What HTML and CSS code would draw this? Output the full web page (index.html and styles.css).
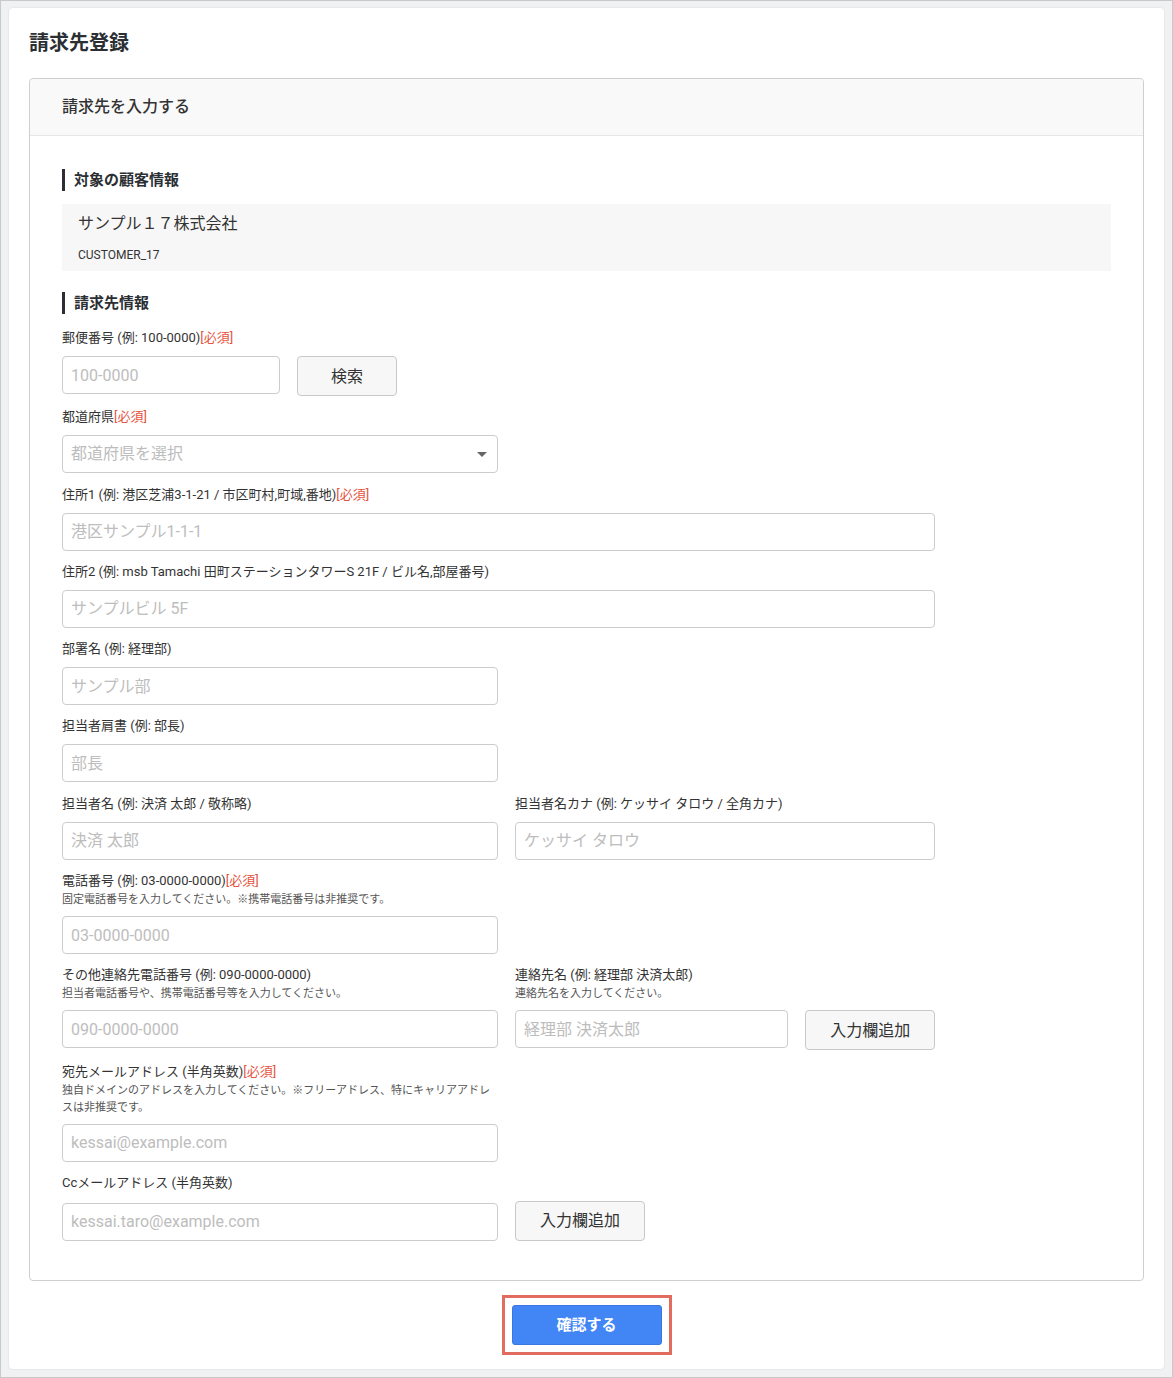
FILE: index.html
```html
<!DOCTYPE html>
<html lang="ja">
<head>
<meta charset="utf-8">
<title>請求先登録</title>
<link rel="stylesheet" href="styles.css">
</head>
<body>
<div class="frame">
  <div class="card">
    <h1 class="title">請求先登録</h1>
    <div class="panel">
      <div class="panel-head">請求先を入力する</div>
      <div class="panel-body">
        <h2 class="sec">対象の顧客情報</h2>
        <div class="cust">
          <div class="cust-name">サンプル１７株式会社</div>
          <div class="cust-id">CUSTOMER_17</div>
        </div>
        <h2 class="sec sec2">請求先情報</h2>
        <div class="grid">
          <div class="field full">
            <div class="label">郵便番号 (例: 100-0000)<span class="req">[必須]</span></div>
            <div class="row">
              <input class="inp w218" placeholder="100-0000">
              <button class="btn w100">検索</button>
            </div>
          </div>
          <div class="field">
            <div class="label">都道府県<span class="req">[必須]</span></div>
            <div class="select"><span>都道府県を選択</span><i class="caret"></i></div>
          </div>
          <div class="field full">
            <div class="label">住所1 (例: 港区芝浦3-1-21 / 市区町村,町域,番地)<span class="req">[必須]</span></div>
            <input class="inp" placeholder="港区サンプル1-1-1">
          </div>
          <div class="field full">
            <div class="label">住所2 (例: msb Tamachi 田町ステーションタワーS 21F / ビル名,部屋番号)</div>
            <input class="inp" placeholder="サンプルビル 5F">
          </div>
          <div class="field full">
            <div class="label">部署名 (例: 経理部)</div>
            <input class="inp w436" placeholder="サンプル部">
          </div>
          <div class="field full">
            <div class="label">担当者肩書 (例: 部長)</div>
            <input class="inp w436" placeholder="部長">
          </div>
          <div class="field">
            <div class="label">担当者名 (例: 決済 太郎 / 敬称略)</div>
            <input class="inp" placeholder="決済 太郎">
          </div>
          <div class="field">
            <div class="label">担当者名カナ (例: ケッサイ タロウ / 全角カナ)</div>
            <input class="inp" placeholder="ケッサイ タロウ">
          </div>
          <div class="field full">
            <div class="label">電話番号 (例: 03-0000-0000)<span class="req">[必須]</span></div>
            <div class="help">固定電話番号を入力してください。※携帯電話番号は非推奨です。</div>
            <input class="inp w436" placeholder="03-0000-0000">
          </div>
          <div class="field">
            <div class="label">その他連絡先電話番号 (例: 090-0000-0000)</div>
            <div class="help">担当者電話番号や、携帯電話番号等を入力してください。</div>
            <input class="inp" placeholder="090-0000-0000">
          </div>
          <div class="field">
            <div class="label">連絡先名 (例: 経理部 決済太郎)</div>
            <div class="help">連絡先名を入力してください。</div>
            <div class="row">
              <input class="inp w274" placeholder="経理部 決済太郎">
              <button class="btn w130">入力欄追加</button>
            </div>
          </div>
          <div class="field">
            <div class="label">宛先メールアドレス (半角英数)<span class="req">[必須]</span></div>
            <div class="help">独自ドメインのアドレスを入力してください。※フリーアドレス、特にキャリアアドレスは非推奨です。</div>
            <input class="inp" placeholder="kessai@example.com">
          </div>
          <div class="field"></div>
          <div class="field full last">
            <div class="label">Ccメールアドレス (半角英数)</div>
            <div class="row bottom">
              <input class="inp w436" placeholder="kessai.taro@example.com">
              <button class="btn w130">入力欄追加</button>
            </div>
          </div>
        </div>
      </div>
    </div>
    <div class="actions">
      <div class="highlight"><button class="primary">確認する</button></div>
    </div>
  </div>
</div>
</body>
</html>
```

FILE: styles.css
```css
* { box-sizing: border-box; }
html, body { margin: 0; padding: 0; }
body {
  font-family: Roboto, "Noto Sans CJK JP", sans-serif;
  color: #333;
  background: #fff;
}
.frame {
  width: 1173px;
  height: 1378px;
  border: 1px solid #c9c9c9;
  background: #f0f1f3;
  padding: 7px 8px 8px 8px;
}
.card {
  background: #fff;
  border-radius: 4px;
  box-shadow: 0 0 2px rgba(0,0,0,0.12);
  height: 1361px;
  padding: 21px 20px 0 20px;
}
.title {
  margin: 0 0 21px 0;
  font-size: 20px;
  line-height: 28px;
  font-weight: 700;
  color: #2b2f33;
}
.panel {
  border: 1px solid #cfcfcf;
  border-radius: 4px;
  width: 1115px;
  height: 1203px;
}
.panel-head {
  height: 57px;
  background: #f9f9f9;
  border-bottom: 1px solid #e6e6e6;
  border-radius: 4px 4px 0 0;
  padding: 0 32px;
  font-size: 16px;
  font-weight: 500;
  line-height: 56px;
  color: #333;
}
.panel-body {
  padding: 33px 32px 0 32px;
}
.sec {
  margin: 0 0 13px 0;
  border-left: 3px solid #2b2f33;
  padding-left: 9px;
  font-size: 15px;
  font-weight: 700;
  line-height: 22px;
  color: #2b2f33;
}
.sec2 { margin-top: 21px; margin-bottom: 14px; }
.cust {
  background: #f7f7f7;
  height: 67px;
  padding: 8px 16px 0 16px;
}
.cust-name { font-size: 16px; line-height: 24px; color: #333; }
.cust-id { font-size: 12px; line-height: 16px; margin-top: 11px; color: #333; }
.grid {
  display: grid;
  grid-template-columns: 436px 420px;
  column-gap: 17px;
}
.field { margin-bottom: 11.3px; }
.field.last { margin-bottom: 0; }
.full { grid-column: 1 / 3; }
.label {
  font-size: 13px;
  line-height: 20px;
  margin-bottom: 8px;
  color: #333;
}
.label:has(+ .help) { margin-bottom: 0; }
.req { color: #e5533d; }
.help {
  font-size: 11px;
  line-height: 17px;
  color: #555;
  margin-bottom: 8px;
}
.row { display: flex; gap: 17px; align-items: flex-start; }
.row.bottom { align-items: flex-end; }
.inp {
  display: block;
  width: 100%;
  height: 38px;
  border: 1px solid #ccc;
  border-radius: 4px;
  padding: 0 8px;
  font-family: Roboto, "Noto Sans CJK JP", sans-serif;
  font-size: 16px;
  color: #333;
  background: #fff;
  outline: none;
}
.inp::placeholder { color: #bdbdbd; }
.w218 { width: 218px; }
.w274 { width: 274px; }
.w436 { width: 436px; }
.btn {
  height: 40px;
  border: 1px solid #c8c8c8;
  border-radius: 4px;
  background: #f7f7f7;
  font-family: Roboto, "Noto Sans CJK JP", sans-serif;
  font-size: 16px;
  color: #333;
  padding: 0 0 3px 0;
}
.w100 { width: 100px; }
.w130 { width: 130px; }
.select {
  position: relative;
  height: 38px;
  border: 1px solid #ccc;
  border-radius: 4px;
  padding: 0 8px;
  font-size: 16px;
  line-height: 36px;
  color: #bdbdbd;
}
.caret {
  position: absolute;
  right: 10px;
  top: 16px;
  width: 0;
  height: 0;
  border-left: 5px solid transparent;
  border-right: 5px solid transparent;
  border-top: 5px solid #666;
}
.actions {
  display: flex;
  justify-content: center;
  margin-top: 14px;
}
.highlight {
  border: 3px solid #e26c5e;
  padding: 7px;
}
.primary {
  display: block;
  width: 150px;
  height: 40px;
  border: 1px solid #3a77e0;
  border-radius: 3px;
  background: #4285f4;
  color: #fff;
  font-family: Roboto, "Noto Sans CJK JP", sans-serif;
  font-size: 15px;
  font-weight: 700;
  padding: 0 0 3px 0;
}
```
